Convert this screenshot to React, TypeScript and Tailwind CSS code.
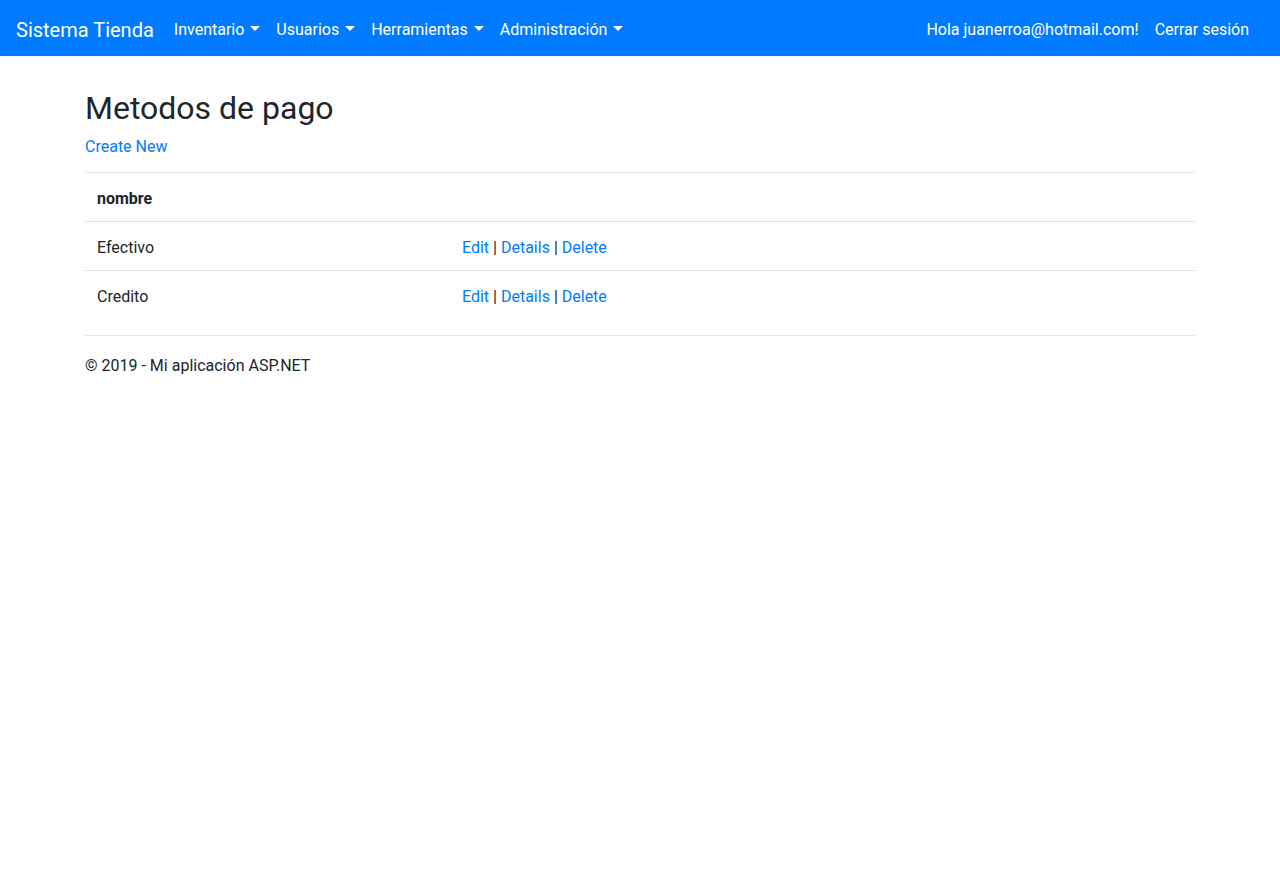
function Caret() {
  return (
    <span className="inline-block ml-[6px] align-[4px] w-0 h-0 border-t-[5px] border-t-white border-x-[5px] border-x-transparent" />
  );
}

function NavItem({ label }: { label: string }) {
  return (
    <a href="#" className="px-2 py-2 text-white text-[16px] leading-6 whitespace-nowrap">
      {label}
      <Caret />
    </a>
  );
}

function Actions() {
  return (
    <span>
      <a href="#" className="text-[#007bff]">Edit</a> |{" "}
      <a href="#" className="text-[#007bff]">Details</a> |{" "}
      <a href="#" className="text-[#007bff]">Delete</a>
    </span>
  );
}

export default function App() {
  const rows = ["Efectivo", "Credito"];
  return (
    <div className="min-h-[888px] bg-white text-[#212529] text-[16px] leading-6" style={{ fontFamily: 'Roboto, "Liberation Sans", sans-serif' }}>
      <nav className="h-[56px] bg-[#007bff] flex items-center pl-4 pr-[23px] pt-[4px]">
        <a href="#" className="text-white text-[20px] leading-[30px] mr-[12px] whitespace-nowrap">Sistema Tienda</a>
        <div className="flex items-center">
          <NavItem label="Inventario" />
          <NavItem label="Usuarios" />
          <NavItem label="Herramientas" />
          <NavItem label="Administración" />
        </div>
        <div className="ml-auto flex items-center">
          <span className="px-2 py-2 text-white whitespace-nowrap">Hola juanerroa@hotmail.com!</span>
          <a href="#" className="px-2 py-2 text-white whitespace-nowrap">Cerrar sesión</a>
        </div>
      </nav>

      <div className="w-[1110px] mx-auto pt-[33px]">
        <h2 className="text-[32px] leading-[38px] font-normal mb-2">Metodos de pago</h2>
        <p className="mb-[13px]">
          <a href="#" className="text-[#007bff]">Create New</a>
        </p>
        <table className="w-full border-collapse">
          <tbody>
            <tr>
              <th className="text-left font-bold px-3 pt-[14px] pb-[10px] border-t border-[#dee2e6] w-[365px]">nombre</th>
              <th className="px-3 pt-[14px] pb-[10px] border-t border-[#dee2e6]"></th>
            </tr>
            {rows.map((r) => (
              <tr key={r}>
                <td className="px-3 pt-[14px] pb-[10px] border-t border-[#dee2e6]">{r}</td>
                <td className="px-3 pt-[14px] pb-[10px] border-t border-[#dee2e6]"><Actions /></td>
              </tr>
            ))}
          </tbody>
        </table>
        <hr className="mt-4 mb-[18px] border-0 border-t border-[#e5e5e5]" />
        <footer>
          <p>© 2019 - Mi aplicación ASP.NET</p>
        </footer>
      </div>
    </div>
  );
}
